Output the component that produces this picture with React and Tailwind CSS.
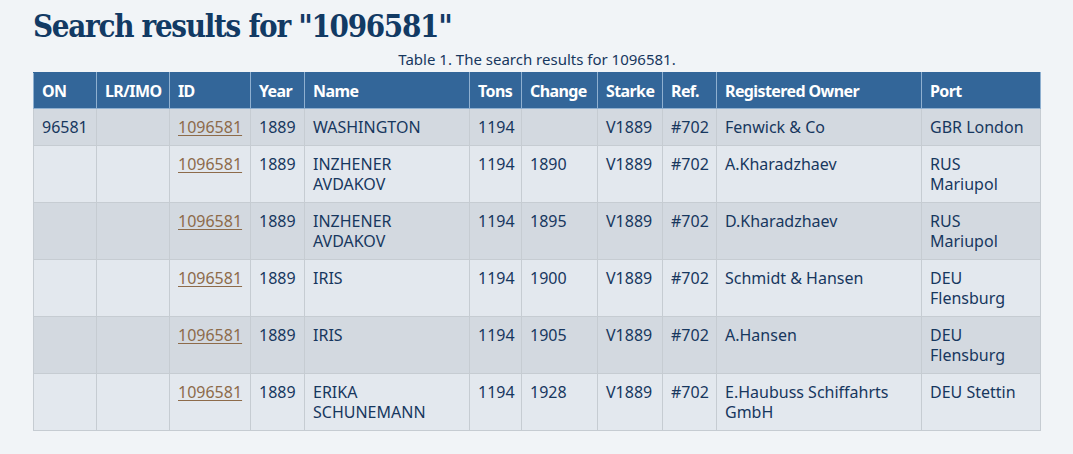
import React from "react";

const cols = [
  { k: "ON", w: "w-[63px]" },
  { k: "LR/IMO", w: "w-[73px]" },
  { k: "ID", w: "w-[81px]" },
  { k: "Year", w: "w-[54px]" },
  { k: "Name", w: "w-[165px]" },
  { k: "Tons", w: "w-[52px]" },
  { k: "Change", w: "w-[76px]" },
  { k: "Starke", w: "w-[65px]" },
  { k: "Ref.", w: "w-[54px]" },
  { k: "Registered Owner", w: "w-[205px]" },
  { k: "Port", w: "w-[119px]" },
];

const rows = [
  ["96581", "", "1096581", "1889", "WASHINGTON", "1194", "", "V1889", "#702", "Fenwick & Co", "GBR London"],
  ["", "", "1096581", "1889", "INZHENER AVDAKOV", "1194", "1890", "V1889", "#702", "A.Kharadzhaev", "RUS Mariupol"],
  ["", "", "1096581", "1889", "INZHENER AVDAKOV", "1194", "1895", "V1889", "#702", "D.Kharadzhaev", "RUS Mariupol"],
  ["", "", "1096581", "1889", "IRIS", "1194", "1900", "V1889", "#702", "Schmidt & Hansen", "DEU Flensburg"],
  ["", "", "1096581", "1889", "IRIS", "1194", "1905", "V1889", "#702", "A.Hansen", "DEU Flensburg"],
  ["", "", "1096581", "1889", "ERIKA SCHUNEMANN", "1194", "1928", "V1889", "#702", "E.Haubuss Schiffahrts GmbH", "DEU Stettin"],
];

export default function App() {
  return (
    <div className="min-h-[454px] bg-[#f1f4f7] text-[#17375e] font-['Noto_Sans',sans-serif]">
      <div className="ml-[33px] w-[1007px] pt-[6px]">
        <h1 className="font-['DejaVu_Serif_Condensed','DejaVu_Serif',serif] font-bold text-[31px] leading-[40px] text-[#123a64] tracking-[-1.3px]">
          Search results for "1096581"
        </h1>
        <table className="w-[1007px] table-fixed border-collapse mt-[3px]">
          <caption className="text-[15px] leading-[20px] text-[#17375e] pb-[3px]">
            Table 1. The search results for 1096581.
          </caption>
          <colgroup>
            {cols.map((c) => (
              <col key={c.k} className={c.w} />
            ))}
          </colgroup>
          <thead>
            <tr className="bg-[#336699]">
              {cols.map((c) => (
                <th
                  key={c.k}
                  className="border border-[#8fb0d0] border-t-[#336699] px-2 pt-2 pb-[7px] text-left text-[16px] leading-5 font-bold text-white tracking-[-0.6px] whitespace-nowrap"
                >
                  {c.k}
                </th>
              ))}
            </tr>
          </thead>
          <tbody>
            {rows.map((r, i) => (
              <tr key={i} className={i % 2 === 0 ? "bg-[#d3d9e0]" : "bg-[#e3e8ee]"}>
                {r.map((v, j) => (
                  <td
                    key={j}
                    className="border border-[#c6ccd2] px-2 py-2 align-top text-[16px] leading-5"
                  >
                    {j === 2 ? (
                      <a href="#" className="text-[#8d6b4a] underline underline-offset-2">
                        {v}
                      </a>
                    ) : (
                      v
                    )}
                  </td>
                ))}
              </tr>
            ))}
          </tbody>
        </table>
      </div>
    </div>
  );
}
